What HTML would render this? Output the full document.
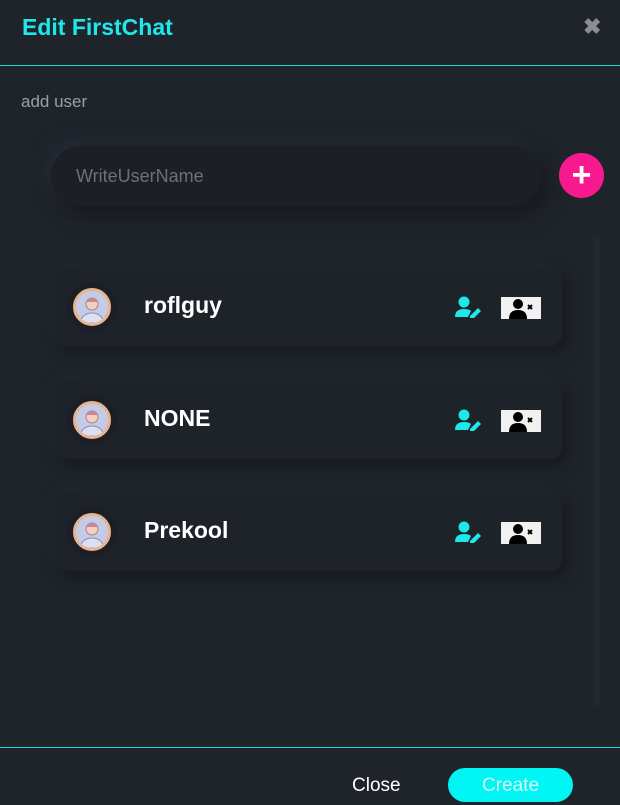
<!DOCTYPE html>
<html><head><style>
body{margin:0;width:620px;height:805px;background:#1f242b;font-family:"Liberation Sans",sans-serif;position:relative;overflow:hidden}
.t{position:absolute;left:22px;top:14px;color:#1de9ec;font-size:23px;font-weight:bold}
.x{position:absolute;left:583px;top:14px;color:#8a8e93;font-size:22px;font-weight:bold}
.hl{position:absolute;left:0;width:620px;height:1px;background:#19d6e0}
.lab{position:absolute;left:21px;top:92px;color:#9aa0a6;font-size:17px}
.inp{position:absolute;left:51px;top:146px;width:490px;height:60px;border-radius:30px;background:#1c2026;box-shadow:8px 10px 20px #171a1f,-6px -6px 16px #262c34}
.inp span{position:absolute;left:25px;top:20px;color:#6c7177;font-size:18px}
.plus{position:absolute;left:559px;top:153px;width:45px;height:45px;border-radius:50%;background:#f8198e;color:#fff;font-size:34px;font-weight:bold;text-align:center;line-height:44px}
.card{position:absolute;left:55px;width:507px;height:78px;border-radius:12px;background:#1e232a;box-shadow:6px 6px 14px #171a1f,-4px -4px 10px #242a31}
.av{position:absolute;left:18px;top:20px;width:38px;height:38px;border-radius:50%;background:#c4cbe6;border:3px solid #e7b48f;box-sizing:border-box;overflow:hidden;box-shadow:0 0 0 6px #1b1f25}
.nm{position:absolute;left:89px;top:24px;color:#fff;font-size:23px;font-weight:bold}
.ed{position:absolute;left:400px;top:28px}
.rm{position:absolute;left:446px;top:29px;width:40px;height:22px;background:#f1f1f1}
.sb{position:absolute;left:593px;top:236px;width:7px;height:470px;background:#22282f;border-radius:3px}
.cl{position:absolute;left:352px;top:775px;color:#fff;font-size:19px}
.cr{position:absolute;left:448px;top:768px;width:125px;height:34px;border-radius:17px;background:#00f5f5;color:#d8fbfb;font-size:19px;text-align:center;line-height:36px}
</style></head><body>
<div class="t">Edit FirstChat</div>
<div class="x">✖</div>
<div class="hl" style="top:65px"></div>
<div class="lab">add user</div>
<div class="inp"><span>WriteUserName</span></div>
<div class="plus">+</div>
<div class="sb"></div>
<div class="card" style="top:268px">
<div class="av"><svg width="32" height="32" viewBox="0 0 32 32"><circle cx="16" cy="13" r="6" fill="#f0d2c4" stroke="#b07f8a"/><path d="M10 11q6-8 12 0" fill="#c9868e"/><path d="M4 32q2-10 12-10t12 10z" fill="#dde0f0" stroke="#8c8fb0"/></svg></div>
<div class="nm">roflguy</div>
<svg class="ed" width="28" height="22" viewBox="0 0 28 22"><circle cx="9" cy="6" r="5.5" fill="#1de9ec"/><path d="M0 21q0-8 9-8q5 0 7 2l-3 6z" fill="#1de9ec"/><path d="M15 20l8-8 3 3-8 8h-3z" fill="#1de9ec"/></svg>
<div class="rm"><svg width="40" height="22" viewBox="0 0 40 22"><circle cx="17" cy="7" r="5" fill="#000"/><path d="M8 22q0-9 9-9t9 9z" fill="#000"/><path d="M27 8l4 4m0-4l-4 4" stroke="#000" stroke-width="2"/></svg></div>
</div>
<div class="card" style="top:381px">
<div class="av"><svg width="32" height="32" viewBox="0 0 32 32"><circle cx="16" cy="13" r="6" fill="#f0d2c4" stroke="#b07f8a"/><path d="M10 11q6-8 12 0" fill="#c9868e"/><path d="M4 32q2-10 12-10t12 10z" fill="#dde0f0" stroke="#8c8fb0"/></svg></div>
<div class="nm">NONE</div>
<svg class="ed" width="28" height="22" viewBox="0 0 28 22"><circle cx="9" cy="6" r="5.5" fill="#1de9ec"/><path d="M0 21q0-8 9-8q5 0 7 2l-3 6z" fill="#1de9ec"/><path d="M15 20l8-8 3 3-8 8h-3z" fill="#1de9ec"/></svg>
<div class="rm"><svg width="40" height="22" viewBox="0 0 40 22"><circle cx="17" cy="7" r="5" fill="#000"/><path d="M8 22q0-9 9-9t9 9z" fill="#000"/><path d="M27 8l4 4m0-4l-4 4" stroke="#000" stroke-width="2"/></svg></div>
</div>
<div class="card" style="top:493px">
<div class="av"><svg width="32" height="32" viewBox="0 0 32 32"><circle cx="16" cy="13" r="6" fill="#f0d2c4" stroke="#b07f8a"/><path d="M10 11q6-8 12 0" fill="#c9868e"/><path d="M4 32q2-10 12-10t12 10z" fill="#dde0f0" stroke="#8c8fb0"/></svg></div>
<div class="nm">Prekool</div>
<svg class="ed" width="28" height="22" viewBox="0 0 28 22"><circle cx="9" cy="6" r="5.5" fill="#1de9ec"/><path d="M0 21q0-8 9-8q5 0 7 2l-3 6z" fill="#1de9ec"/><path d="M15 20l8-8 3 3-8 8h-3z" fill="#1de9ec"/></svg>
<div class="rm"><svg width="40" height="22" viewBox="0 0 40 22"><circle cx="17" cy="7" r="5" fill="#000"/><path d="M8 22q0-9 9-9t9 9z" fill="#000"/><path d="M27 8l4 4m0-4l-4 4" stroke="#000" stroke-width="2"/></svg></div>
</div>
<div class="hl" style="top:747px"></div>
<div class="cl">Close</div>
<div class="cr">Create</div>
</body></html>
